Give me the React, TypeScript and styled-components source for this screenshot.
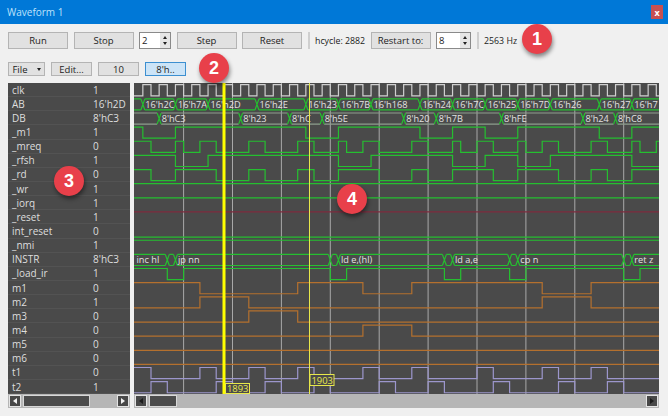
import styled, { createGlobalStyle } from 'styled-components';

const GlobalStyle = createGlobalStyle`
  html, body {
    margin: 0;
    padding: 0;
    background: #f0f0f0;
  }
`;

const Window = styled.div`
  position: relative;
  display: flex;
  flex-direction: column;
  width: 668px;
  height: 416px;
  overflow: hidden;
  font-family: "Open Sans", "Liberation Sans", sans-serif;
  font-size: 9.5px;
  color: #222;
  background: #f0f0f0;
`;

const TitleBar = styled.div`
  display: flex;
  align-items: center;
  justify-content: space-between;
  height: 24px;
  padding: 0 5px 0 7px;
  color: #bfe3fb;
  font-size: 10px;
  background: #0078d7;
`;

const CloseButton = styled.div`
  display: flex;
  align-items: center;
  justify-content: center;
  width: 12px;
  height: 14px;
  color: #fff;
  font-size: 9px;
  font-weight: 700;
  background: #c75050;
`;

const ToolRow = styled.div<{ $height: number; $top: number; $gap: number }>`
  display: flex;
  align-items: stretch;
  gap: ${props => props.$gap}px;
  height: ${props => props.$height}px;
  margin-top: ${props => props.$top}px;
  padding-left: 8px;
`;

const Button = styled.div<{ $width: number; $checked?: boolean }>`
  display: flex;
  align-items: center;
  justify-content: center;
  box-sizing: border-box;
  width: ${props => props.$width}px;
  border: 1px solid ${props => (props.$checked ? '#3c8fd0' : '#b4b4b4')};
  background: ${props => (props.$checked ? '#cce4f7' : '#e1e1e1')};
`;

const Caret = styled.span`
  width: 0;
  height: 0;
  margin: 3px 0 0 9px;
  border: 2px solid transparent;
  border-top: 3px solid #222;
`;

const Spinner = styled.div<{ $width: number }>`
  display: flex;
  align-items: center;
  justify-content: space-between;
  box-sizing: border-box;
  width: ${props => props.$width}px;
  padding-left: 2px;
  border: 1px solid #8a8a8a;
  background: #fff;
`;

const SpinArrows = styled.div`
  display: flex;
  flex-direction: column;
  align-items: center;
  justify-content: space-evenly;
  width: 10px;
  height: 100%;
  background: #e6e6e6;
`;

const SpinArrow = styled.span<{ $up?: boolean }>`
  width: 0;
  height: 0;
  border-left: 2px solid transparent;
  border-right: 2px solid transparent;
  border-bottom: ${props => (props.$up ? '3px solid #222' : 'none')};
  border-top: ${props => (props.$up ? 'none' : '3px solid #222')};
`;

const Separator = styled.div`
  width: 2px;
  background: #cfcfcf;
`;

const Label = styled.div<{ $width: number }>`
  display: flex;
  align-items: center;
  width: ${props => props.$width}px;
  font-size: 8.8px;
  white-space: nowrap;
`;

const Main = styled.div`
  display: flex;
  gap: 4px;
  margin: 7px 9px 0 8px;
`;

const SignalColumn = styled.div`
  display: flex;
  flex-direction: column;
  width: 122px;
`;

const SignalList = styled.div`
  display: flex;
  flex-direction: column;
  height: 311px;
  color: #dedede;
  font-size: 10px;
  line-height: 1;
  background: #4a4a4a;
`;

const SignalRow = styled.div`
  display: flex;
  flex: 1 1 0;
  align-items: center;
  box-sizing: border-box;
  min-height: 0;
  padding-left: 4px;
  border-bottom: 1px solid #535353;
`;

const SignalName = styled.span`
  width: 81px;
`;

const WaveColumn = styled.div`
  display: flex;
  flex-direction: column;
  flex: 1;
  min-width: 0;
`;

const WaveSvg = styled.svg`
  display: block;
  width: 525px;
  height: 311px;
  background: #4a4a4a;
`;

const BusText = styled.text`
  font-family: "Open Sans", "Liberation Sans", sans-serif;
  font-size: 9.2px;
  fill: #e2e2e2;
`;

const MarkerText = styled.text`
  font-family: "Open Sans", "Liberation Sans", sans-serif;
  font-size: 9.4px;
  fill: #e8e84a;
`;

const ScrollBar = styled.div`
  display: flex;
  align-items: center;
  gap: 2px;
  height: 14px;
  padding: 0 1px;
  background: #b6b6b6;
`;

const ScrollArrow = styled.div`
  display: flex;
  align-items: center;
  justify-content: center;
  box-sizing: border-box;
  width: 12px;
  height: 12px;
  border: 1px solid #e4e4e4;
  background: #484848;
`;

const ArrowGlyph = styled.span<{ $right?: boolean; $color: string }>`
  width: 0;
  height: 0;
  border-top: 3px solid transparent;
  border-bottom: 3px solid transparent;
  border-left: ${props => (props.$right ? `4px solid ${props.$color}` : 'none')};
  border-right: ${props => (props.$right ? 'none' : `4px solid ${props.$color}`)};
`;

const ScrollThumb = styled.div<{ $width: number }>`
  box-sizing: border-box;
  width: ${props => props.$width}px;
  height: 12px;
  border: 1px solid #d8d8d8;
  background: #4c4c4c;
`;

const ScrollFill = styled.div`
  flex: 1;
`;

const Badge = styled.div<{ $x: number; $y: number }>`
  position: absolute;
  left: ${props => props.$x - 15}px;
  top: ${props => props.$y - 15}px;
  display: flex;
  align-items: center;
  justify-content: center;
  width: 30px;
  height: 30px;
  border-radius: 50%;
  color: #fff;
  font-family: "Liberation Sans", sans-serif;
  font-size: 18px;
  font-weight: 700;
  box-shadow: 1px 3px 4px rgba(0, 0, 0, 0.45);
  background: #e8404a;
`;

const GREEN = '#25bf30';
const ORANGE = '#b4702e';
const LAVENDER = '#9c96cc';
const GRID = '#a8a8a8';

const X = (n: number) => 134.7 + 8.15 * n;
const rowTop = (i: number) => 83 + 14.14 * i;
const highY = (i: number) => rowTop(i) + 1.7;
const lowY = (i: number) => rowTop(i) + 12.8;

interface Wave {
  row: number;
  color: string;
  high: boolean;
  edges: number[];
}

interface Bus {
  row: number;
  line: string;
  segments: [number, string][];
}

const SIGNALS = [
  ['clk', '1'], ['AB', "16'h2D"], ['DB', "8'hC3"], ['_m1', '1'], ['_mreq', '0'], ['_rfsh', '1'],
  ['_rd', '0'], ['_wr', '1'], ['_iorq', '1'], ['_reset', '1'], ['int_reset', '0'], ['_nmi', '1'],
  ['INSTR', "8'hC3"], ['_load_ir', '1'], ['m1', '0'], ['m2', '1'], ['m3', '0'], ['m4', '0'],
  ['m5', '0'], ['m6', '0'], ['t1', '0'], ['t2', '1']
];

const clockEdges = Array.from({ length: 65 }, (_, i) => i + 1);

const WAVES: Wave[] = [
  { row: 0, color: '#cfcfcf', high: false, edges: clockEdges },
  { row: 3, color: GREEN, high: true, edges: [1, 5, 21, 25, 35, 39, 43, 47, 57, 61] },
  { row: 4, color: GREEN, high: true, edges: [2, 5, 6, 8, 10, 14, 16, 20, 22, 25, 26, 28, 30, 34, 36, 39, 40, 42, 44, 47, 48, 50, 52, 56, 58, 61, 62, 64] },
  { row: 5, color: GREEN, high: true, edges: [5, 9, 25, 29, 39, 43, 47, 51, 61] },
  { row: 6, color: GREEN, high: true, edges: [2, 5, 10, 14, 16, 20, 22, 25, 30, 34, 36, 39, 44, 47, 52, 56, 58, 61] },
  { row: 7, color: GREEN, high: true, edges: [] },
  { row: 8, color: GREEN, high: true, edges: [] },
  { row: 9, color: '#7e2b3e', high: true, edges: [] },
  { row: 10, color: GREEN, high: false, edges: [] },
  { row: 11, color: GREEN, high: true, edges: [] },
  { row: 13, color: GREEN, high: true, edges: [4, 6, 24, 26, 38, 40, 46, 48, 60, 62] },
  { row: 14, color: ORANGE, high: true, edges: [8, 20, 28, 34, 50, 56] },
  { row: 15, color: ORANGE, high: false, edges: [8, 14, 50, 56] },
  { row: 16, color: ORANGE, high: false, edges: [14, 20] },
  { row: 17, color: ORANGE, high: false, edges: [28, 34] },
  { row: 18, color: ORANGE, high: false, edges: [] },
  { row: 19, color: ORANGE, high: false, edges: [] },
  { row: 20, color: LAVENDER, high: true, edges: [2, 8, 10, 14, 16, 20, 22, 28, 30, 34, 36, 42, 44, 50, 52, 56, 58] },
  { row: 21, color: LAVENDER, high: false, edges: [2, 4, 10, 12, 16, 18, 22, 24, 30, 32, 36, 38, 44, 46, 52, 54, 58, 60] }
];

const BUSES: Bus[] = [
  {
    row: 1,
    line: GREEN,
    segments: [
      [-1, ''], [1, "16'h2C"], [5, "16'h7A"], [9, "16'h2D"], [15, "16'h2E"], [21, "16'h23"], [25, "16'h7B"],
      [29, "16'h168"], [35, "16'h24"], [39, "16'h7C"], [43, "16'h25"], [47, "16'h7D"], [51, "16'h26"],
      [57, "16'h27"], [61, "16'h7"], [66, '']
    ]
  },
  {
    row: 2,
    line: '#8d9d8d',
    segments: [
      [-1, ''], [3, "8'hC3"], [13, "8'h23"], [19, "8'hC"], [23, "8'h5E"], [33, "8'h20"], [37, "8'h7B"],
      [45, "8'hFE"], [55, "8'h24"], [59, "8'hC8"], [66, '']
    ]
  },
  {
    row: 12,
    line: GREEN,
    segments: [
      [-1, 'inc hl'], [4, ''], [5, 'jp nn'], [24, ''], [25, 'ld e,(hl)'], [38, ''], [39, 'ld a,e'],
      [46, ''], [47, 'cp n'], [60, ''], [61, 'ret z'], [66, '']
    ]
  }
];

const GRID_LINES = Array.from({ length: 10 }, (_, i) => 6 + i * 6);

const wavePath = ({ row, high, edges }: Wave) => {
  let level = high;
  let d = `M134 ${level ? highY(row) : lowY(row)}`;
  edges.forEach(n => {
    const y = level ? lowY(row) : highY(row);
    d += ` H${X(n)} V${y}`;
    level = !level;
  });
  return `${d} H659`;
};

const busRails = (row: number, from: number, to: number) =>
  `M${X(from) + 2} ${highY(row)} H${X(to) - 2} M${X(from) + 2} ${lowY(row)} H${X(to) - 2}`;

const busCrossing = (row: number, from: number) => {
  const top = highY(row);
  const bottom = lowY(row);
  const mid = (top + bottom) / 2;
  const a = X(from);
  return `M${a - 2} ${top} L${a} ${mid} L${a - 2} ${bottom} M${a + 2} ${top} L${a} ${mid} L${a + 2} ${bottom}`;
};

const WaveCanvas = () => (
  <WaveSvg viewBox="134 83 525 311">
    {GRID_LINES.map(n => (
      <line key={n} x1={X(n)} x2={X(n)} y1={83} y2={394} stroke={GRID} strokeWidth={1} />
    ))}
    {WAVES.map(wave => (
      <path key={wave.row} d={wavePath(wave)} fill="none" stroke={wave.color} strokeWidth={1.2} />
    ))}
    {BUSES.map(bus => bus.segments.slice(0, -1).map(([from, text], i) => (
      <g key={`${bus.row}-${from}`}>
        <path d={busRails(bus.row, from, bus.segments[i + 1][0])} fill="none" stroke={bus.line} strokeWidth={1.2} />
        <path d={busCrossing(bus.row, from)} fill="none" stroke={GREEN} strokeWidth={1.2} />
        {text && (
          <BusText x={Math.max(X(from), 134) + 2.5} y={highY(bus.row) + 8.8}>{text}</BusText>
        )}
      </g>
    )))}
    <line x1={224} x2={224} y1={83} y2={394} stroke="#ffff00" strokeWidth={3} />
    <line x1={309.5} x2={309.5} y1={83} y2={394} stroke="#e8e84a" strokeWidth={1} />
    <rect x={225.5} y={383.5} width={24} height={10} fill="#4a4a4a" stroke="#e8e84a" />
    <MarkerText x={227} y={392}>1893</MarkerText>
    <rect x={310} y={374.5} width={24} height={11} fill="#4a4a4a" stroke="#e8e84a" />
    <MarkerText x={311.5} y={383.5}>1903</MarkerText>
  </WaveSvg>
);

const App = () => {
  return (
    <Window>
      <GlobalStyle />
      <TitleBar>
        Waveform 1
        <CloseButton>x</CloseButton>
      </TitleBar>
      <ToolRow $height={17} $top={8} $gap={5.5}>
        <Button $width={60}>Run</Button>
        <Button $width={60}>Stop</Button>
        <Spinner $width={32}>
          2
          <SpinArrows><SpinArrow $up /><SpinArrow /></SpinArrows>
        </Spinner>
        <Button $width={60}>Step</Button>
        <Button $width={60}>Reset</Button>
        <Separator />
        <Label $width={50}>hcycle: 2882</Label>
        <Button $width={60}>Restart to:</Button>
        <Spinner $width={35}>
          8
          <SpinArrows><SpinArrow $up /><SpinArrow /></SpinArrows>
        </Spinner>
        <Separator />
        <Label $width={40}>2563 Hz</Label>
      </ToolRow>
      <ToolRow $height={14} $top={13} $gap={6}>
        <Button $width={37}>File<Caret /></Button>
        <Button $width={41}>Edit...</Button>
        <Button $width={41}>10</Button>
        <Button $width={41} $checked>8'h..</Button>
      </ToolRow>
      <Main>
        <SignalColumn>
          <SignalList>
            {SIGNALS.map(([name, value]) => (
              <SignalRow key={name}>
                <SignalName>{name}</SignalName>
                {value}
              </SignalRow>
            ))}
          </SignalList>
          <ScrollBar>
            <ScrollArrow><ArrowGlyph $color="#f2f2f2" /></ScrollArrow>
            <ScrollThumb $width={67} />
            <ScrollFill />
            <ScrollArrow><ArrowGlyph $right $color="#f2f2f2" /></ScrollArrow>
          </ScrollBar>
        </SignalColumn>
        <WaveColumn>
          <WaveCanvas />
          <ScrollBar>
            <ScrollArrow><ArrowGlyph $color="#1c1c1c" /></ScrollArrow>
            <ScrollThumb $width={28} />
            <ScrollFill />
            <ScrollArrow><ArrowGlyph $right $color="#1c1c1c" /></ScrollArrow>
          </ScrollBar>
        </WaveColumn>
      </Main>
      <Badge $x={537} $y={39}>1</Badge>
      <Badge $x={214} $y={68}>2</Badge>
      <Badge $x={69} $y={181}>3</Badge>
      <Badge $x={352} $y={199}>4</Badge>
    </Window>
  );
};

export default App;
